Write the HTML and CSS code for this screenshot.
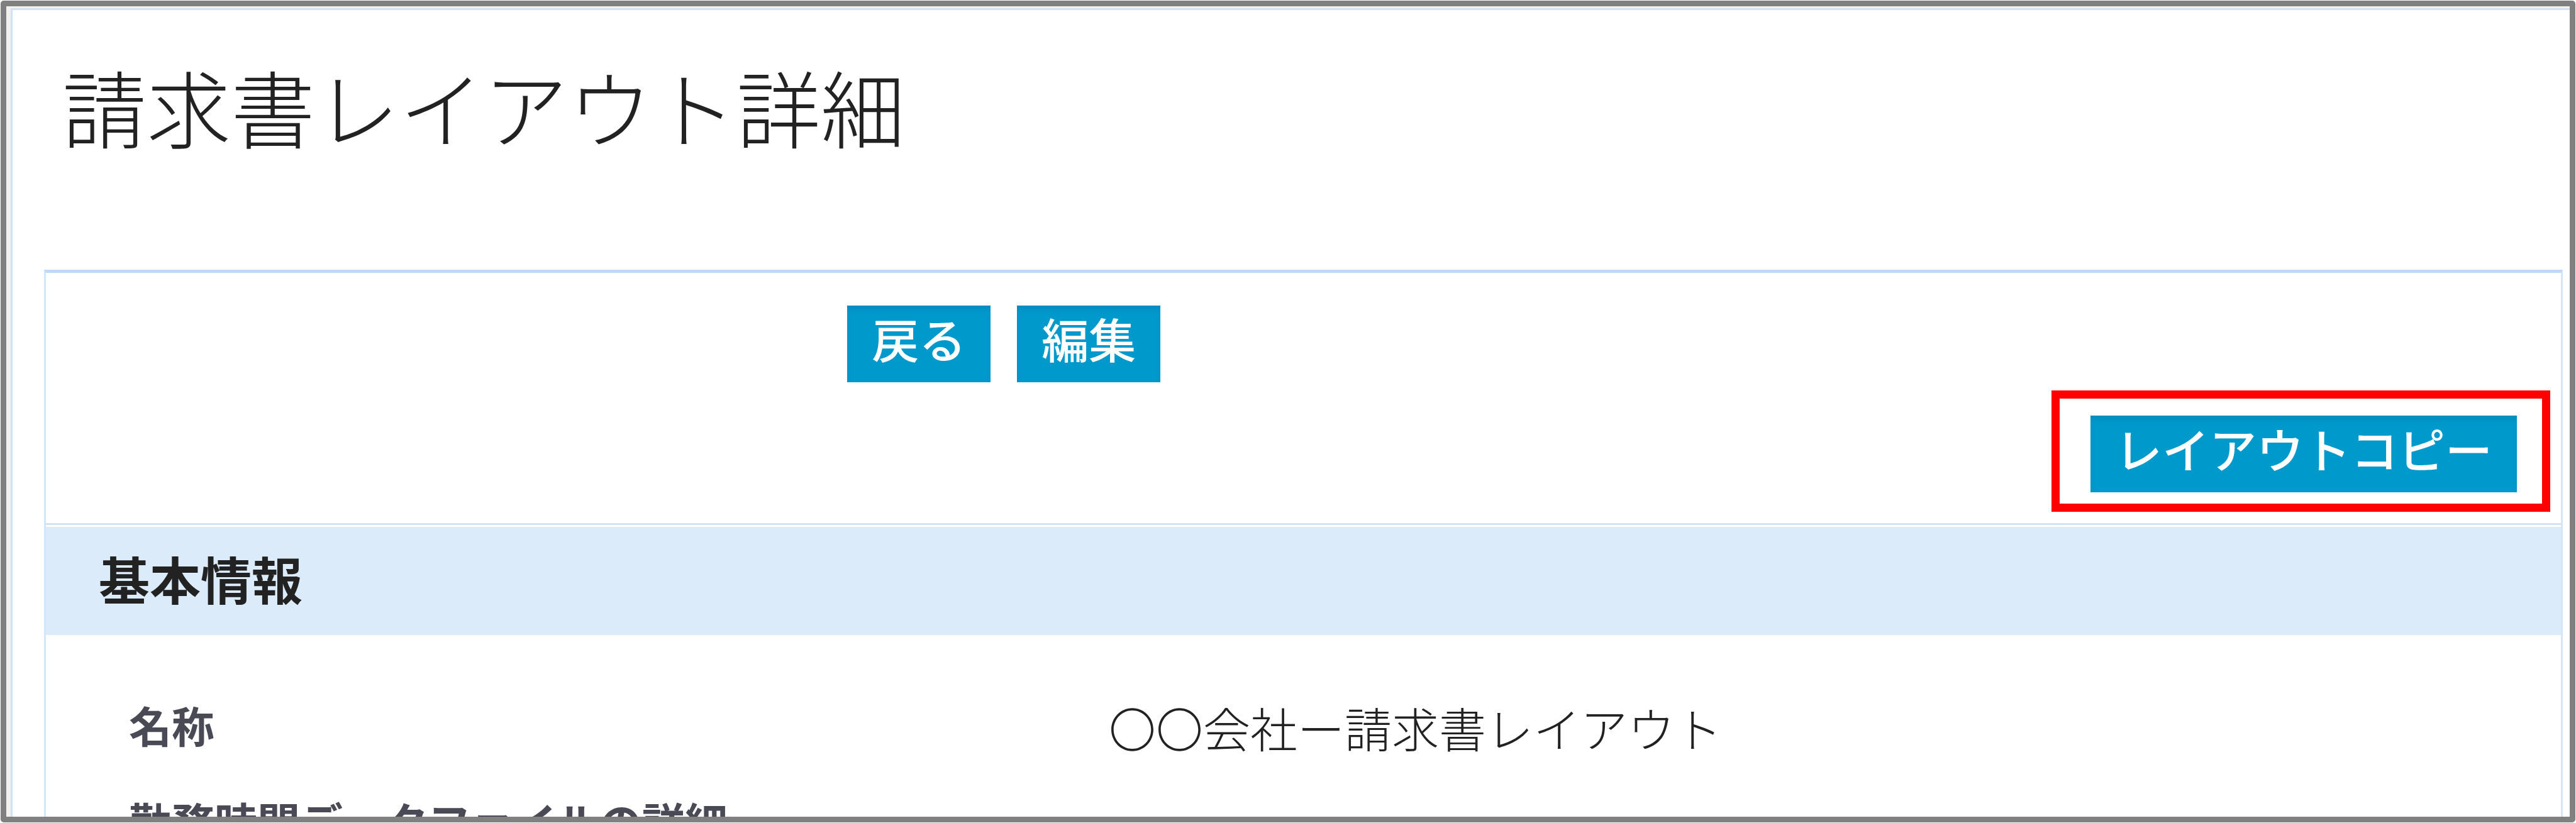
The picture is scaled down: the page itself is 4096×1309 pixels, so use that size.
FILE: index.html
```html
<!DOCTYPE html>
<html lang="ja">
<head>
  <meta charset="utf-8">
  <title>請求書レイアウト詳細</title>
  <link rel="stylesheet" href="styles.css">
</head>
<body>
  <div class="frame">
    <main class="page">
      <h1 class="page-title">請求書レイアウト詳細</h1>
      <section class="detail">
        <div class="toolbar">
          <div class="actions">
            <button type="button" class="btn">戻る</button>
            <button type="button" class="btn">編集</button>
          </div>
          <div class="highlight">
            <button type="button" class="btn">レイアウトコピー</button>
          </div>
        </div>
        <h2 class="section-title">基本情報</h2>
        <dl class="fields">
          <dt class="label">名称</dt>
          <dd class="value">〇〇会社ー請求書レイアウト</dd>
          <dt class="label">勤務時間データファイルの詳細</dt>
          <dd class="value"></dd>
        </dl>
      </section>
    </main>
  </div>
</body>
</html>
```
FILE: styles.css
```css
* {
  box-sizing: border-box;
}

body {
  margin: 0;
  background: #fff;
  color: #222;
  font-family: "Noto Sans CJK JP", sans-serif;
}

.frame {
  display: flex;
  height: calc(100vh - 2px);
  margin: 1px;
  padding: 3px 0 0 7px;
  overflow: hidden;
  border: 9px solid #808080;
  border-radius: 5px;
  background: #f2f1ee;
}

.page {
  flex: 1;
  padding: 0 11px 0 50px;
  border-top: 3px solid #cfe3f8;
  border-left: 3px solid #cfe3f8;
  background: #fff;
}

.page-title {
  margin: 0;
  padding: 53px 0 162px 29px;
  font-size: 134px;
  font-weight: 300;
  line-height: 198px;
}

.detail {
  border: 3px solid #d3e6fa;
  border-top: 5px solid #bcdaf6;
}

.toolbar {
  display: flex;
  flex-direction: column;
  gap: 13px;
  margin-bottom: 3px;
  padding: 52px 17px 18px 0;
  border-bottom: 3px solid #d0e3f8;
}

.actions {
  display: flex;
  gap: 42px;
  margin-left: 32%;
}

.highlight {
  align-self: flex-end;
  display: flex;
  padding: 27px 40px 18px 49px;
  border: 13px solid #f00;
}

.btn {
  height: 122px;
  padding: 0 39px 18px;
  border: 0;
  background: #09c;
  box-shadow: inset 0 9px 9px -3px #008cbf;
  color: #fff;
  font: inherit;
  font-size: 75px;
  font-weight: 500;
  line-height: 104px;
}

.section-title {
  margin: 0;
  padding: 0 84px 10px;
  background: #dbebfa;
  font-size: 81px;
  font-weight: 700;
  line-height: 162px;
}

.fields {
  display: grid;
  grid-template-columns: 1558fr 2309fr;
  margin: 0;
  padding: 66px 0 0 132px;
}

.label {
  color: #4a4a56;
  font-size: 68px;
  font-weight: 700;
  line-height: 153px;
}

.value {
  height: 153px;
  margin: 0;
  font-size: 75px;
  font-weight: 300;
  line-height: 162px;
}
```
